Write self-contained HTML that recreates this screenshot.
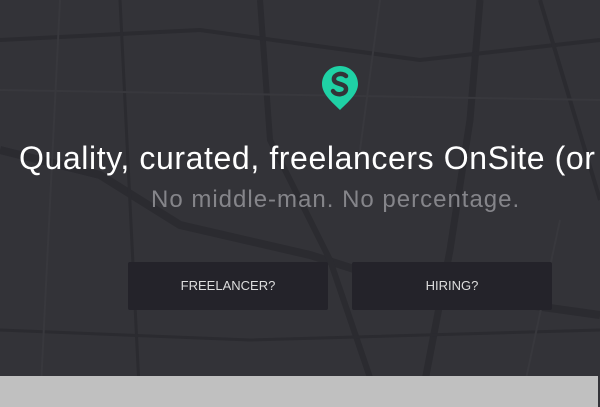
<!DOCTYPE html>
<html><head><style>
body{margin:0;width:600px;height:407px;overflow:hidden;background:#333338;font-family:"Liberation Sans",sans-serif;position:relative}
.t{position:absolute;left:19px;top:140px;font-size:32px;color:#fff;white-space:nowrap;letter-spacing:0.6px}
.s{position:absolute;left:151px;top:186px;font-size:24px;color:#85858a;white-space:nowrap;letter-spacing:1px}
.b{position:absolute;top:262px;width:200px;height:48px;background:#24232a;border-radius:2px;color:#ddd;font-size:13px;text-align:center;line-height:48px}
.bar{position:absolute;left:0;top:376px;width:598px;height:31px;background:#c0c0c0}
</style></head><body>
<svg width="600" height="407" style="position:absolute;left:0;top:0" fill="none" stroke="#2b2b30">
<path d="M0 150 L100 175 L180 225 L310 255 L420 290 L600 315" stroke-width="8"/>
<path d="M260 0 L270 140 L330 260 L380 407" stroke-width="6"/>
<path d="M480 0 L470 120 L450 250 L420 407" stroke-width="7"/>
<path d="M0 40 L200 30 L420 60 L600 40" stroke-width="4"/>
<path d="M120 0 L140 407" stroke-width="3"/>
<path d="M540 0 L600 200" stroke-width="4"/>
<path d="M0 330 L250 340 L600 330" stroke-width="3"/>
<path d="M0 90 L600 100" stroke-width="2" stroke="#38383d"/>
<path d="M60 0 L40 407 M380 0 L360 150 M560 220 L520 407" stroke-width="2" stroke="#38383d"/>
</svg>
<svg width="40" height="48" viewBox="0 0 40 48" style="position:absolute;left:320px;top:64px">
<path d="M20 2 C30 2 38 10 38 20 C38 30 28 38 20 46 C12 38 2 30 2 20 C2 10 10 2 20 2 Z" fill="#1fd1a5"/>
<path d="M26 12 C22 8 13 10 14 16 C15 21 26 19 26 25 C26 31 16 32 13 27" stroke="#333338" stroke-width="4.5" fill="none" stroke-linecap="round"/>
</svg>
<div class="t">Quality, curated, freelancers OnSite (or</div>
<div class="s">No middle-man. No percentage.</div>
<div class="b" style="left:128px">FREELANCER?</div>
<div class="b" style="left:352px">HIRING?</div>
<div class="bar"></div>
</body></html>
